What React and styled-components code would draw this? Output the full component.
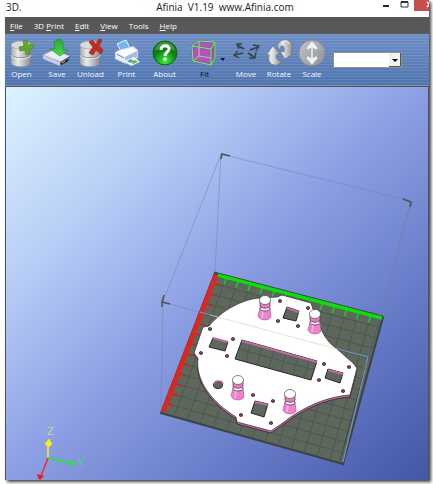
import React from "react";
import styled, { createGlobalStyle } from "styled-components";

const GlobalStyle = createGlobalStyle`
  * {
    box-sizing: border-box;
  }

  body {
    margin: 0;
    background: #fff;
    font-family: "Open Sans", "Noto Sans", sans-serif;
  }
`;

const Desktop = styled.div`
  min-height: 100vh;
  display: flex;
  padding: 0 4px 4px 5px;
  overflow: hidden;
`;

const Window = styled.main`
  flex: 1;
  min-width: 0;
  display: flex;
  flex-direction: column;
  background: #fff;
  box-shadow: 2px 2px 3px rgba(0, 0, 0, 0.75);
`;

const TitleBar = styled.header`
  height: 17px;
  display: grid;
  grid-template-columns: 1fr auto 1fr;
  align-items: start;
  color: #222;
`;

const Logo = styled.span`
  padding-left: 1px;
  font-size: 10px;
  line-height: 15px;
  color: #2b1a1a;
`;

const Title = styled.h1`
  margin: 0;
  padding-left: 16px;
  font-size: 10px;
  font-weight: 400;
  line-height: 15px;
  white-space: pre;
`;

const WindowButtons = styled.div`
  display: flex;
  justify-content: flex-end;
`;

const WindowButton = styled.button`
  width: ${(props) => props.$width}px;
  height: 11px;
  padding: 0;
  border: 0;
  background: ${(props) => (props.$close ? "#c94f4f" : "transparent")};
  line-height: 0;

  svg {
    width: 100%;
    height: 11px;
  }
`;

const MenuBar = styled.nav`
  height: 17px;
  display: flex;
  align-items: center;
  gap: 11px;
  padding-left: 5px;
  background: #585858;
`;

const MenuItem = styled.button`
  padding: 0;
  border: 0;
  background: none;
  color: #fff;
  font-family: inherit;
  font-size: 8px;
  line-height: 12px;
`;

const Toolbar = styled.div`
  height: 52px;
  display: flex;
  align-items: flex-start;
  padding-top: 4px;
  border-bottom: 1px solid #8794ac;
  background: repeating-linear-gradient(
      rgba(255, 255, 255, 0.09) 0 1px,
      transparent 1px 3px
    ),
    linear-gradient(#6f8fc6, #4f74ae);
`;

const ToolButton = styled.button`
  flex: none;
  width: ${(props) => props.$width}px;
  display: flex;
  flex-direction: column;
  align-items: center;
  padding: 0;
  border: 0;
  background: none;
  color: ${(props) => (props.$active ? "#0b1230" : "#f2f6ff")};
  font-family: inherit;
  font-size: 8px;
  line-height: 12px;

  svg {
    height: 30px;
  }
`;

const Combo = styled.div`
  position: relative;
  width: 69px;
  height: 16px;
  margin: 14px 0 0 3px;

  svg {
    position: absolute;
    top: 1px;
    right: 1px;
    pointer-events: none;
  }
`;

const ComboSelect = styled.select`
  display: block;
  width: 100%;
  height: 100%;
  appearance: none;
  border: 1px solid #8a929c;
  border-radius: 0;
  background: #fff;
  font-size: 8px;
`;

const Viewport = styled.section`
  flex: 1;
  display: flex;
  border: solid #4a5264;
  border-width: 1px 1px 0;
  background: linear-gradient(
    to bottom right,
    #dcf3ff 0%,
    #b8cef6 25%,
    #8c9fe4 50%,
    #667ac8 75%,
    #4357a6 100%
  );

  svg {
    width: 100%;
    height: auto;
  }
`;

const Drum = () => (
  <>
    <path d="M2 7v18c0 5 20 5 20 0V7z" fill="url(#metal)" stroke="#7d8288" strokeWidth=".6" />
    <path d="M2 16c0 5 20 5 20 0" fill="none" stroke="#858a8f" />
    <path d="M2 17c0 5 20 5 20 0" fill="none" stroke="#fff" strokeWidth=".7" />
    <ellipse cx="12" cy="7" rx="10" ry="4" fill="#d8dbdc" stroke="#999" strokeWidth=".5" />
  </>
);

const OpenIcon = () => (
  <svg width="26" height="30" viewBox="0 0 26 30">
    <Drum />
    <path
      d="M14 3l4-1 1 5 5-1 1 4-5 1 1 5-4 1-1-5-5 1-1-4 5-1z"
      fill="#5ea82b"
      stroke="#3f841c"
      strokeWidth=".6"
    />
  </svg>
);

const UnloadIcon = () => (
  <svg width="26" height="30" viewBox="0 0 26 30">
    <Drum />
    <path
      d="M11 4l3-2 4 4 3-5 3 1-3 6 4 4-2 4-5-4-3 5-4-2 4-6z"
      fill="#c62a25"
      stroke="#8f1714"
      strokeWidth=".6"
    />
  </svg>
);

const SaveIcon = () => (
  <svg width="30" height="30" viewBox="0 0 30 30">
    <path d="M1 17l10-5 17 6-9 6z" fill="#e8ebf3" stroke="#9ba3b6" strokeWidth=".6" />
    <path d="M1 17l17 7v4L1 21z" fill="#c3cbe0" />
    <path d="M18 24l10-6v4l-10 6z" fill="#5e6881" />
    <path d="M19 25l7-4v2l-7 4z" fill="#17191d" />
    <path d="M20 25l3-2" stroke="#f0b52b" />
    <path d="M12 4c4-4 8-3 9 0v8h5l-8 6-10-7h5z" fill="url(#green)" stroke="#238525" strokeWidth=".6" />
  </svg>
);

const PrintIcon = () => (
  <svg width="28" height="30" viewBox="0 0 28 30">
    <path d="M4 6l9-4 4 8-8 5z" fill="#6fb9f0" stroke="#e8f5ff" />
    <path d="M2 14l6-3 12-3 5 4v8l-12 6L2 21z" fill="#e9eefa" stroke="#95a2c0" strokeWidth=".7" />
    <path d="M3 15l9 4 12-6-5-3-13 3z" fill="#f9fbff" />
    <path d="M12 19v6l12-6v-6z" fill="#aab8dc" />
    <path d="M4 16l7 4" stroke="#6c7ea6" />
    <path d="M11 23l10-4 6 5-9 4z" fill="#f5f9ff" />
    <path d="M14 23l4-2 3 2-4 2z" fill="#3aa8df" />
    <path d="M18 24l4-2 3 2-5 2z" fill="#66b63b" />
    <circle cx="19" cy="24" r="1" fill="#e4a02a" />
  </svg>
);

const AboutIcon = () => (
  <svg width="26" height="30" viewBox="0 0 26 30">
    <circle cx="13" cy="15" r="12" fill="url(#ball)" stroke="#0b6a0b" />
    <path d="M3 13C4 1 22 1 23 13 17 9 9 9 3 13z" fill="#fff" opacity=".22" />
    <path d="M9 12c0-6 9-5 8-1 0 3-4 3-4 7" fill="none" stroke="#fff" strokeWidth="3" />
    <circle cx="13" cy="21" r="1.8" fill="#fff" />
  </svg>
);

const FitIcon = () => (
  <svg width="40" height="30" viewBox="0 0 40 30">
    <path d="M7 8l7-6 16 2-4 7v16L8 23z" fill="#b94fbe" />
    <path d="M26 11l4-7v16l-4 7z" fill="#a24aac" />
    <g fill="none" stroke="#3b8c49" strokeWidth="1.8">
      <path d="M7 8l7-5 16 1-4 7zM7 8l1 15 18 4V11M26 27l4-7V4" />
    </g>
    <g fill="none" stroke="#8ee092" strokeWidth="1">
      <path d="M7 8l7-5 16 1-4 7zM7 8l1 15 18 4V11M26 27l4-7V4M14 3v15l12 2M14 18l-6 5" />
    </g>
    <path d="M35 20h5l-2 3z" fill="#111b2d" />
  </svg>
);

const MoveIcon = () => (
  <svg width="28" height="30" viewBox="0 0 28 30">
    <path
      d="M5 7l7 4M26 9l-8 3M3 17l8-2M22 19l-6-4"
      fill="none"
      stroke="#3a4048"
      strokeWidth="1.8"
    />
    <path
      d="M10 6H5l2 5M21 7l6 1-3 5M6 13l-4 4 5 3M24 14l-1 6-6 0"
      fill="none"
      stroke="#3a4048"
      strokeWidth="1.4"
    />
  </svg>
);

const RotateIcon = () => (
  <svg width="28" height="30" viewBox="0 0 28 30">
    <g fill="url(#metal)" stroke="#6a6f74" strokeWidth=".6">
      <path d="M1 17l7-9 7 8-4 1c0 4 2 6 6 6-3 6-11 5-13 0-1-2-1-3 0-6z" />
      <path d="M12 8C14 1 23 0 26 4c2 4 1 8 0 11l2 1-8 5-5-8 4 1c1-4 0-7-3-6l-1 4z" />
    </g>
    <path d="M4 16l4-6M17 5c3-3 6-2 7 1" fill="none" stroke="#eee" />
  </svg>
);

const ScaleIcon = () => (
  <svg width="28" height="30" viewBox="0 0 28 30">
    <circle cx="14" cy="15" r="13" fill="url(#disc)" stroke="#888d92" />
    <path
      d="M14 3l6 7-2 2-3-2v10l3-2 2 2-6 7-6-7 2-2 3 2V10l-3 2-2-2z"
      fill="#f1f2f2"
      stroke="#a2a5a8"
      strokeWidth=".5"
    />
  </svg>
);

const tools = [
  { name: "Open", width: 33, Icon: OpenIcon },
  { name: "Save", width: 38, Icon: SaveIcon },
  { name: "Unload", width: 29, Icon: UnloadIcon },
  { name: "Print", width: 43, Icon: PrintIcon },
  { name: "About", width: 33, Icon: AboutIcon },
  { name: "Fit", width: 47, Icon: FitIcon, active: true },
  { name: "Move", width: 36, Icon: MoveIcon },
  { name: "Rotate", width: 30, Icon: RotateIcon },
  { name: "Scale", width: 36, Icon: ScaleIcon },
];

const menus = [
  ["", "F", "ile"],
  ["3D ", "P", "rint"],
  ["", "E", "dit"],
  ["", "V", "iew"],
  ["Tools", "", ""],
  ["", "H", "elp"],
];

// gradients used by the toolbar icons
const IconPaints = () => (
  <svg width="0" height="0" style={{ position: "absolute" }} aria-hidden="true">
    <defs>
      <linearGradient id="metal">
        <stop offset="0" stopColor="#a8abad" />
        <stop offset=".35" stopColor="#e9eaea" />
        <stop offset="1" stopColor="#858a8e" />
      </linearGradient>
      <linearGradient id="green" x2="0" y2="1">
        <stop offset="0" stopColor="#2fa53a" />
        <stop offset="1" stopColor="#42e03e" />
      </linearGradient>
      <radialGradient id="ball" cy=".85">
        <stop offset="0" stopColor="#3df23a" />
        <stop offset="1" stopColor="#0b7c12" />
      </radialGradient>
      <linearGradient id="disc" x2="1" y2="1">
        <stop offset="0" stopColor="#c3c6c8" />
        <stop offset="1" stopColor="#8d9195" />
      </linearGradient>
    </defs>
  </svg>
);

// corners of the build platform: back, right, front, left
const platform = [
  [215, 273],
  [383, 317],
  [343, 464],
  [161, 413],
];

const between = (a, b, t) => [a[0] + (b[0] - a[0]) * t, a[1] + (b[1] - a[1]) * t];
const segment = (a, b) => `M${a.join(" ")}L${b.join(" ")}`;

const CELLS = 14;
const steps = Array.from({ length: CELLS - 1 }, (_, i) => (i + 1) / CELLS);
const [back, right, front, left] = platform;
const gridPath = steps
  .map(
    (t) =>
      segment(between(back, right, t), between(left, front, t)) +
      segment(between(back, left, t), between(right, front, t))
  )
  .join("");
const greenTicks = steps
  .map((t) => {
    const start = between(back, right, t);
    return segment(start, between(start, between(left, front, t), 0.06));
  })
  .join("");
const redTicks = steps
  .map((t) => {
    const start = between(back, left, t);
    return segment(start, between(start, between(right, front, t), 0.05));
  })
  .join("");

const platePath =
  "M209 326C222 310 243 299 260 298L277 297L282 295L311 303L313 309L322 331Q327 342 337 349L353 363L357 368L350 395C322 397 298 411 284 422L271 431L237 422L236 417C212 402 195 381 198 358L194 353L203 327Z";

const windows = [
  "213,338 228,342 225,351 209,347",
  "242,340 317,361 311,380 235,359",
  "287,307 299,311 296,321 283,318",
  "328,369 343,373 340,383 325,378",
  "255,401 268,404 264,417 251,413",
];

const windowEdges = "M213 338L228 342M242 341L317 362M287 308L299 312M328 370L343 374M255 402L268 405";

const screwHoles = [
  [210, 329], [201, 353], [233, 339], [227, 356], [280, 301], [278, 321], [298, 326],
  [308, 308], [324, 364], [319, 380], [349, 367], [343, 391], [273, 401], [271, 423],
  [253, 395], [241, 415],
];

const pegs = [
  [265, 300],
  [315, 314],
  [238, 380],
  [290, 394],
];

const Peg = ({ x, y }) => (
  <g transform={`translate(${x} ${y})`} strokeWidth=".7">
    <path d="M-5 8L-7 16C-5 21 4 21 6 17L5 8z" fill="#ee83cd" stroke="#b5579a" />
    <path d="M-2 11L-3 18" stroke="#ffb5e6" strokeWidth="1.5" />
    <ellipse cx="0" cy="8" rx="5" ry="3" fill="#fff" stroke="#352b34" />
    <path d="M-5 1v5c1 3 9 3 10 0V1z" fill="#e77bc3" stroke="#443040" />
    <ellipse cx="0" cy="0" rx="5.5" ry="4.5" fill="#fff" stroke="#514c50" />
  </g>
);

const Model = () => (
  <svg viewBox="6 87 422 393" role="img" aria-label="Part on build platform">
    <polygon points={platform.map((p) => p.join(",")).join(" ")} fill="#5d675b" stroke="#3b4442" strokeWidth="2" />
    <path d={gridPath} stroke="#49534a" strokeWidth=".8" />
    <path d="M379 318L340 461" stroke="#3d4743" strokeWidth="1" />
    <path d={greenTicks} stroke="#10d913" strokeWidth="1.5" />
    <path d={redTicks} stroke="#d61f18" strokeWidth="1.4" />
    <path d="M218 275L382 318" stroke="#0be00f" strokeWidth="3.5" />
    <path d="M216 275L163 412" stroke="#e3241c" strokeWidth="4.5" />
    <path d="M214 272L383 316" stroke="#414b35" strokeWidth=".8" />

    <path d={platePath} fill="#cf69aa" stroke="#2b272a" strokeWidth=".8" transform="translate(0 2)" />
    <path d={platePath} fill="#fff" stroke="#3b353a" strokeWidth=".8" />
    {windows.map((points) => (
      <polygon key={points} points={points} fill="#5d675b" stroke="#242825" strokeWidth="1" />
    ))}
    <path
      d="M250 344L246 361M262 347L257 364M274 351L269 368M286 354L281 371M298 357L293 374M309 360L305 377M239 349L314 370"
      stroke="#49534a"
      strokeWidth=".8"
    />
    <path d={windowEdges} stroke="#c668a2" strokeWidth="2" />
    {screwHoles.map(([x, y]) => (
      <ellipse key={`${x}-${y}`} cx={x} cy={y} rx="1.7" ry="1.5" fill="#884569" stroke="#41273a" strokeWidth=".8" />
    ))}
    <ellipse cx="218" cy="385" rx="4.5" ry="3.5" fill="#5d675b" stroke="#382832" />
    <path d="M214 384c1-4 8-4 9 0" fill="none" stroke="#bb6598" strokeWidth="1.3" />
    {pegs.map(([x, y]) => (
      <Peg key={x} x={x} y={y} />
    ))}

    <g fill="none" stroke="#70849f" strokeWidth=".8">
      <path
        d="M221 154L411 201L383 317M221 154L163 302L161 413M221 154L215 272M411 201L368 357"
        opacity=".65"
      />
      <path d="M163 302L203 313" opacity=".65" />
      <path d="M200 312L210 315M337 349L368 357L343 462" stroke="#6f92bd" strokeWidth="1.2" />
      <path d="M210 315L337 349" stroke="#d9dcd0" />
    </g>
    <path
      d="M221 159L222 154L230 156M403 199L411 202L410 207M164 295L162 302L170 304M162 302V307"
      fill="none"
      stroke="#4c554e"
      strokeWidth="1.6"
    />

    <g fill="none" strokeWidth="1.4">
      <path d="M48 458V445" stroke="#fff12c" />
      <path d="M45 444l4-5 3 5-3 3z" fill="#fff200" stroke="#fff200" strokeWidth=".5" />
      <path d="M48 458L70 463" stroke="#18ef25" />
      <path d="M70 460l5 4-6 2z" fill="#18ef25" />
      <path d="M48 458L41 476" stroke="#f12029" />
      <path d="M37 474l7 2-4 4-2-2z" fill="#f4141c" />
    </g>
    <g fontFamily="Liberation Sans, sans-serif" fontSize="11">
      <text x="47" y="435" fill="#d9d973">Z</text>
      <text x="77" y="466" fill="#3be168">Y</text>
    </g>
  </svg>
);

const App = () => {
  return (
    <Desktop>
      <GlobalStyle />
      <IconPaints />
      <Window>
        <TitleBar>
          <Logo>3D.</Logo>
          <Title>{"Afinia  V1.19  www.Afinia.com"}</Title>
          <WindowButtons>
            <WindowButton $width={19} aria-label="Minimize">
              <svg viewBox="0 0 19 11">
                <path d="M7 6h6" stroke="#222" strokeWidth="2" />
              </svg>
            </WindowButton>
            <WindowButton $width={19} aria-label="Maximize">
              <svg viewBox="0 0 19 11">
                <path d="M6 2h7v5H6z" fill="none" stroke="#333" />
                <path d="M6 2h7" stroke="#333" strokeWidth="2" />
              </svg>
            </WindowButton>
            <WindowButton $width={15} $close aria-label="Close">
              <svg viewBox="0 0 15 11">
                <path d="M13 2l5 5M13 7l4-4" stroke="#fff" strokeWidth="1.4" />
              </svg>
            </WindowButton>
          </WindowButtons>
        </TitleBar>
        <MenuBar>
          {menus.map(([before, key, after]) => (
            <MenuItem key={before + key}>
              {before}
              {key && <u>{key}</u>}
              {after}
            </MenuItem>
          ))}
        </MenuBar>
        <Toolbar>
          {tools.map(({ name, width, Icon, active }) => (
            <ToolButton key={name} $width={width} $active={active}>
              <Icon />
              {name}
            </ToolButton>
          ))}
          <Combo>
            <ComboSelect aria-label="Value" defaultValue="">
              <option value=""></option>
            </ComboSelect>
            <svg width="12" height="14" viewBox="0 0 12 14">
              <path d="M0 0h12v14H0z" fill="#f1f1ee" />
              <path d="M0 13.5h11.5V0" fill="none" stroke="#555" />
              <path d="M3 6h6L6 9z" fill="#000" />
            </svg>
          </Combo>
        </Toolbar>
        <Viewport>
          <Model />
        </Viewport>
      </Window>
    </Desktop>
  );
};

export default App;
